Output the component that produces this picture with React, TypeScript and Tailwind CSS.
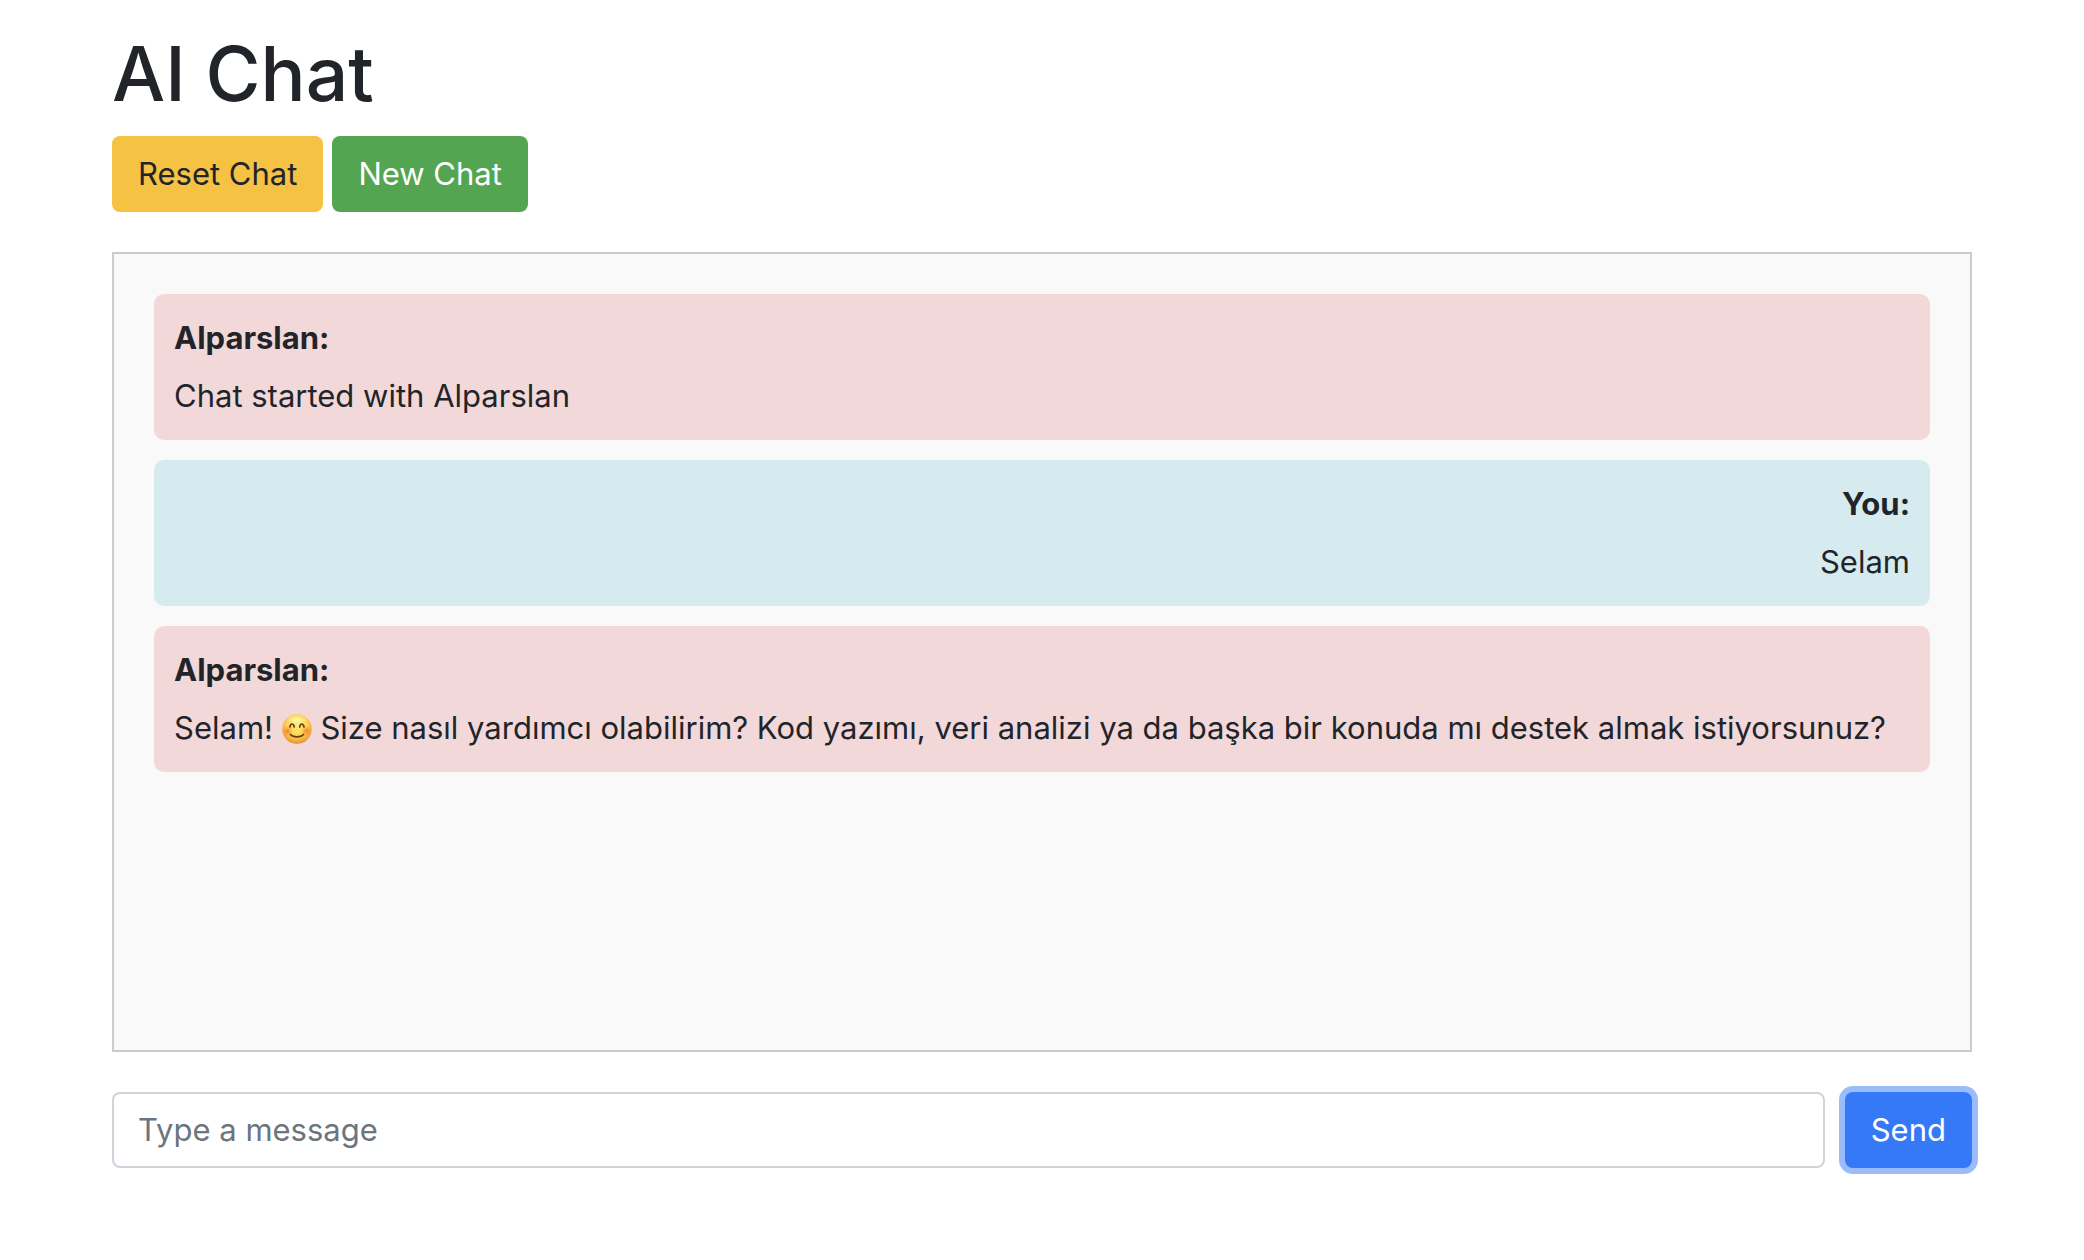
import React, { useState } from "react";
import { clsx } from "clsx";

interface Message {
  sender: "user" | "bot";
  name: string;
  content: React.ReactNode;
}

function SmileEmoji() {
  return (
    <svg
      viewBox="0 0 60 60"
      role="img"
      aria-label="smiling face"
      className="inline-block w-[30px] h-[30px] -mt-1 align-middle"
    >
      <defs>
        <radialGradient id="face" cx="50%" cy="38%" r="62%">
          <stop offset="0%" stopColor="#ffec70" />
          <stop offset="55%" stopColor="#fdd654" />
          <stop offset="85%" stopColor="#f3ac3c" />
          <stop offset="100%" stopColor="#dd8e35" />
        </radialGradient>
        <radialGradient id="shine" cx="50%" cy="50%" r="50%">
          <stop offset="0%" stopColor="#fffbc4" />
          <stop offset="100%" stopColor="#fff08a" stopOpacity="0" />
        </radialGradient>
        <radialGradient id="blush" cx="50%" cy="50%" r="50%">
          <stop offset="0%" stopColor="#f4692f" stopOpacity="0.75" />
          <stop offset="100%" stopColor="#f4812f" stopOpacity="0" />
        </radialGradient>
      </defs>
      <circle cx="30" cy="30" r="29.5" fill="url(#face)" />
      <ellipse cx="30" cy="12" rx="22" ry="11" fill="url(#shine)" />
      <circle cx="11" cy="34" r="11" fill="url(#blush)" />
      <circle cx="49" cy="34" r="11" fill="url(#blush)" />
      <g fill="none" stroke="#6b3d12" strokeWidth="3.4" strokeLinecap="round">
        <path d="M16 26c1-8 7-8 8.500 0" />
        <path d="M35.500 26c1-8 7-8 8.500 0" />
        <path d="M17 41c6 6.500 20 6.500 26 0" />
      </g>
    </svg>
  );
}

const messages: Message[] = [
  { sender: "bot", name: "Alparslan", content: "Chat started with Alparslan" },
  { sender: "user", name: "You", content: "Selam" },
  {
    sender: "bot",
    name: "Alparslan",
    content: (
      <>
        Selam! <SmileEmoji /> Size nasıl yardımcı olabilirim? Kod yazımı, veri analizi ya da başka
        bir konuda mı destek almak istiyorsunuz?
      </>
    ),
  },
];

const button = "rounded-lg px-[26px] py-[14px] leading-[48px]";

export default function App() {
  const [text, setText] = useState("");

  return (
    <div className="min-h-screen bg-white text-[#212529] font-['Inter',sans-serif] text-[31px] leading-[48px]">
      <main className="max-w-[1920px] mx-auto px-[30px] pt-7">
        <h1 className="text-[75px] leading-[92px] font-medium mb-4">AI Chat</h1>

        <div className="flex gap-[9px]">
          <button type="button" className={clsx(button, "bg-[#f5c244]")}>
            Reset Chat
          </button>
          <button type="button" className={clsx(button, "bg-[#54a552] text-white")}>
            New Chat
          </button>
        </div>

        {/* Messages */}
        <div className="flex flex-col gap-5 min-h-[800px] my-10 p-10 bg-[#f9f9f9] border-2 border-[#cccccc]">
          {messages.map((message, i) => (
            <div
              key={i}
              className={clsx(
                "rounded-[10px] p-5",
                message.sender === "user" ? "bg-[#d6ebef] text-right" : "bg-[#f3d8da]"
              )}
            >
              <strong className="block font-bold mb-[10px]">{message.name}:</strong>
              <p>{message.content}</p>
            </div>
          ))}
        </div>

        {/* Message form */}
        <form className="flex gap-5" onSubmit={(e) => e.preventDefault()}>
          <input
            type="text"
            aria-label="Message"
            placeholder="Type a message"
            value={text}
            onChange={(e) => setText(e.target.value)}
            className="flex-1 min-w-0 rounded-lg border-2 border-[#ced4da] bg-white px-6 py-3 leading-[48px] placeholder:text-[#6c757d]"
          />
          <button
            type="submit"
            className={clsx(button, "bg-[#3579f6] text-white ring-6 ring-[#9bbcfb] outline-none")}
          >
            Send
          </button>
        </form>
      </main>
    </div>
  );
}
